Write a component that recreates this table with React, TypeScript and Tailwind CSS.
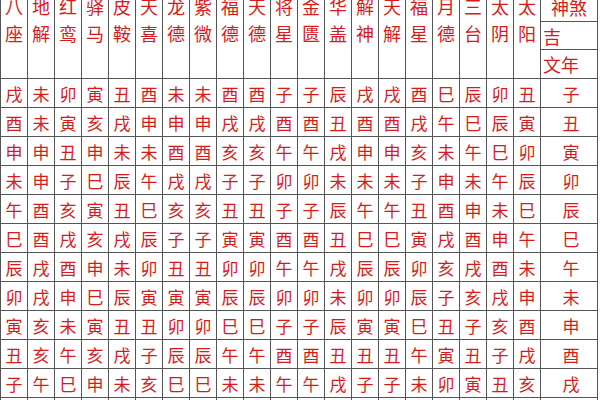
const headers = [
  '八座', '地解', '红鸾', '驿马', '皮鞍', '天喜', '龙德', '紫微', '福德', '天德',
  '将星', '金匮', '华盖', '解神', '天解', '福星', '月德', '三台', '太阴', '太阳',
];

// 年支 + 各神煞所在地支
const rows: [string, string][] = [
  ['子', '戌未卯寅丑酉未未酉酉子子辰戌戌酉巳辰卯丑'],
  ['丑', '酉未寅亥戌申申申戌戌酉酉丑酉酉戌午巳辰寅'],
  ['寅', '申申丑申未未酉酉亥亥午午戌申申亥未午巳卯'],
  ['卯', '未申子巳辰午戌戌子子卯卯未未未子申未午辰'],
  ['辰', '午酉亥寅丑巳亥亥丑丑子子辰午午丑酉申未巳'],
  ['巳', '巳酉戌亥戌辰子子寅寅酉酉丑巳巳寅戌酉申午'],
  ['午', '辰戌酉申未卯丑丑卯卯午午戌辰辰卯亥戌酉未'],
  ['未', '卯戌申巳辰寅寅寅辰辰卯卯未卯卯辰子亥戌申'],
  ['申', '寅亥未寅丑丑卯卯巳巳子子辰寅寅巳丑子亥酉'],
  ['酉', '丑亥午亥戌子辰辰午午酉酉丑丑丑午寅丑子戌'],
  ['戌', '子午巳申未亥巳巳未未午午戌子子未卯寅丑亥'],
  ['亥', '亥午辰巳辰戌午午申申卯卯未亥亥申辰卯寅子'],
];

const App = () => {
  return (
    <div className="w-[600px] h-[400px] overflow-hidden bg-white">
      <div className="-mt-[7px] grid grid-cols-[repeat(20,27px)_57px] grid-rows-[29px_28px_29px_repeat(12,29px)] border-l border-[#555] text-[#d41c1c] font-['Noto_Sans_CJK_SC',sans-serif]">
        {/* 表头 */}
        {headers.map((h, i) => (
          <div
            key={h + i}
            className="row-span-3 border-r border-b border-[#555] flex flex-col items-center text-[18px] leading-[27px]"
          >
            {Array.from(h).map((c, j) => (
              <span key={j}>{c}</span>
            ))}
          </div>
        ))}
        <div className="border-r border-b border-[#555] flex items-center justify-center text-[18px] leading-none">
          神煞
        </div>
        <div className="border-r border-b border-[#555] flex items-center pl-[2px] text-[18px] leading-none">
          吉
        </div>
        <div className="border-r border-b border-[#555] flex items-center pl-[2px] text-[18px] leading-none">
          文年
        </div>

        {/* 数据 */}
        {rows.map(([year, vals]) => (
          <>
            {Array.from(vals).map((c, j) => (
              <div
                key={year + j}
                className="border-r border-b border-[#555] flex items-center justify-center text-[17px] leading-none"
              >
                {c}
              </div>
            ))}
            <div
              key={year}
              className="border-r border-b border-[#555] flex items-center justify-center pl-[4px] text-[17px] leading-none"
            >
              {year}
            </div>
          </>
        ))}
      </div>
    </div>
  );
};

export default App;
